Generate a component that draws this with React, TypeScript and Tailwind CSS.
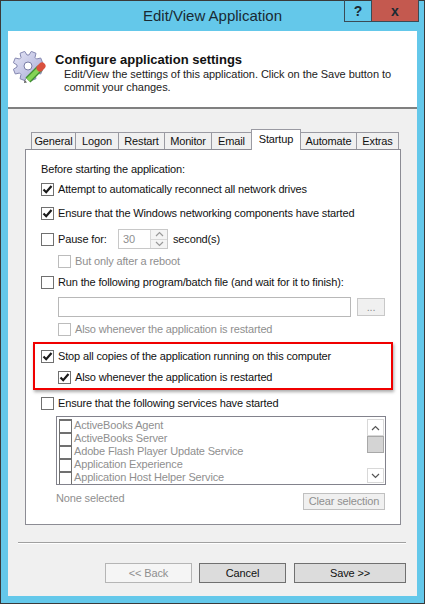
const uiFont = "font-['Liberation_Sans',Arial,sans-serif]"

function Check({ checked, disabled }: { checked?: boolean; disabled?: boolean }) {
  return (
    <span
      className={`flex h-[13px] w-[13px] shrink-0 items-center justify-center border bg-white ${
        disabled ? 'border-[#bcbcbc]' : 'border-[#707070]'
      }`}
    >
      {checked && (
        <svg width="11" height="11" viewBox="0 0 11 11">
          <path d="M1.5 5.5 L4.2 8.2 L9.5 2" fill="none" stroke="#1a1a1a" strokeWidth="2.2" />
        </svg>
      )}
    </span>
  )
}

function Row({
  label,
  checked,
  disabled,
  indent,
  className = '',
}: {
  label: string
  checked?: boolean
  disabled?: boolean
  indent?: boolean
  className?: string
}) {
  return (
    <div className={`flex h-[14px] items-center gap-[4px] ${indent ? 'ml-[17px]' : ''} ${className}`}>
      <Check checked={checked} disabled={disabled} />
      <span className={`whitespace-nowrap ${disabled ? 'text-[#8f8f8f]' : 'text-[#111]'}`}>{label}</span>
    </div>
  )
}

function Chevron({ up, color = '#555' }: { up?: boolean; color?: string }) {
  return (
    <svg width="9" height="6" viewBox="0 0 9 6">
      <path d={up ? 'M1 5 L4.5 1.5 L8 5' : 'M1 1 L4.5 4.5 L8 1'} fill="none" stroke={color} strokeWidth="1.2" />
    </svg>
  )
}

const tabs = [
  { name: 'General', w: 'w-[45px]' },
  { name: 'Logon', w: 'w-[44px]' },
  { name: 'Restart', w: 'w-[47px]' },
  { name: 'Monitor', w: 'w-[48px]' },
  { name: 'Email', w: 'w-[41px]' },
  { name: 'Startup', w: 'w-[50px]' },
  { name: 'Automate', w: 'w-[57px]' },
  { name: 'Extras', w: 'w-[43px]' },
]

const services = [
  'ActiveBooks Agent',
  'ActiveBooks Server',
  'Adobe Flash Player Update Service',
  'Application Experience',
  'Application Host Helper Service',
]

// 8 tooth gear outline around (16,15)
function gearPath() {
  const pts: string[] = []
  for (let i = 0; i < 8; i++) {
    const a = (i * Math.PI) / 4 + Math.PI / 8
    const offsets: [number, number][] = [
      [-0.3, 11],
      [-0.17, 15],
      [0.17, 15],
      [0.3, 11],
    ]
    for (const [da, r] of offsets) {
      pts.push(`${(16 + r * Math.cos(a + da)).toFixed(1)} ${(15 + r * Math.sin(a + da)).toFixed(1)}`)
    }
  }
  return `M${pts.join('L')}Z`
}

function GearIcon() {
  return (
    <svg width="34" height="34" viewBox="0 0 34 34" className="shrink-0">
      <defs>
        <linearGradient id="gear" x1="0" y1="0" x2="1" y2="1">
          <stop offset="0" stopColor="#e6e7f7" />
          <stop offset="1" stopColor="#a5a8d4" />
        </linearGradient>
      </defs>
      <path d={gearPath()} fill="url(#gear)" stroke="#8487b0" strokeWidth="1" />
      <circle cx="16" cy="15" r="4" fill="#fff" stroke="#7a7da6" />
      <path d="M16 29 L28 17" stroke="#3f8f30" strokeWidth="7" />
      <path d="M16 29 L28 17" stroke="#84d455" strokeWidth="4.5" />
      <path d="M28 17 L30 15" stroke="#d9503e" strokeWidth="7" strokeLinecap="round" />
      <path d="M12.5 28.5 L15 31.5 L12 32 Z" fill="#666" />
    </svg>
  )
}

export default function App() {
  return (
    <div className={`${uiFont} flex h-[604px] w-[425px] flex-col border border-[#3a3a3a] bg-[#64c8ea] px-[7px] pb-[7px] text-[11px] leading-[14px] tracking-[-0.15px] text-[#111]`}>
      <div className="relative flex h-[30px] shrink-0 items-center justify-center text-[15px] tracking-normal text-[#1a2a33]">
        Edit/View Application
        <div className="absolute right-[-2px] top-[-1px] flex h-[22px] border border-t-0 border-[#3a4a55]">
          <span className="flex w-[27px] items-center justify-center border-r border-[#3a4a55] text-[14px] font-bold">?</span>
          <span className="flex w-[46px] items-center justify-center bg-[#c4594f] text-[14px] font-bold">x</span>
        </div>
      </div>
      <div className="flex min-h-0 flex-1 flex-col bg-[#f0f0f0]">
        <div className="flex h-[78px] shrink-0 border-b-2 border-[#808080] bg-white pl-[4px] pt-[20px]">
          <GearIcon />
          <div className="ml-[9px] pt-[1px]">
            <div className="text-[13px] font-bold leading-[15px] tracking-normal">Configure application settings</div>
            <div className="ml-[9px] mt-[1px] w-[340px] leading-[13px] tracking-[-0.05px] text-[#222]">
              Edit/View the settings of this application. Click on the Save button to commit your changes.
            </div>
          </div>
        </div>
        <div className="mt-[20px] flex h-[20px] items-end pl-[23px]">
          {tabs.map((t) => (
            <span
              key={t.name}
              className={`flex items-center justify-center border border-b-0 border-[#9a9aa2] ${t.w} ${
                t.name === 'Startup'
                  ? 'relative z-10 mb-[-1px] -ml-px h-[21px] bg-white pb-[3px]'
                  : '-ml-px h-[17px] bg-[#f0f0f0] first:ml-0'
              }`}
            >
              {t.name}
            </span>
          ))}
        </div>
        <div className="ml-[17px] flex h-[376px] w-[376px] flex-col border border-[#8c8c94] bg-white pl-[15px] pt-[12px]">
          <div>Before starting the application:</div>
          <Row className="mt-[6px]" checked label="Attempt to automatically reconnect all network drives" />
          <Row className="mt-[10px]" checked label="Ensure that the Windows networking components have started" />
          <div className="mt-[9px] flex h-[20px] items-center">
            <Check />
            <span className="ml-[4px] w-[60px]">Pause for:</span>
            <div className="flex h-[20px] w-[50px] items-center justify-between border border-[#c8c8c8] pl-[4px] text-[#8f8f8f]">
              30
              <div className="flex h-full w-[17px] flex-col border-l border-[#d8d8d8]">
                <span className="flex flex-1 items-center justify-center border-b border-[#d8d8d8] bg-[#f4f4f4]">
                  <Chevron up color="#999" />
                </span>
                <span className="flex flex-1 items-center justify-center bg-[#f4f4f4]">
                  <Chevron color="#999" />
                </span>
              </div>
            </div>
            <span className="ml-[5px]">second(s)</span>
          </div>
          <Row className="mt-[5px]" indent disabled label="But only after a reboot" />
          <Row className="mt-[7px]" label="Run the following program/batch file (and wait for it to finish):" />
          <div className="mt-[8px] flex items-center">
            <div className="ml-[17px] h-[20px] w-[293px] border border-[#b8b8b8]" />
            <div className="ml-[6px] flex h-[18px] w-[28px] items-center justify-center border border-[#c8c8c8] bg-[#f0f0f0] text-[#8f8f8f]">...</div>
          </div>
          <Row className="mt-[5px]" indent disabled label="Also whenever the application is restarted" />
          <div className="-ml-[8px] mt-[6px] h-[48px] w-[360px] border-2 border-[#f00000] pl-[6px] pt-[5px] shadow-[1px_2px_3px_#aaa]">
            <Row checked label="Stop all copies of the application running on this computer" />
            <Row className="mt-[7px]" indent checked label="Also whenever the application is restarted" />
          </div>
          <Row className="mt-[6px]" label="Ensure that the following services have started" />
          <div className="ml-[15px] mt-[6px] flex h-[69px] w-[330px] border border-[#82828c] pt-[2px]">
            <div className="flex-1 overflow-hidden pl-[2px]">
              {services.map((s) => (
                <div key={s} className="flex h-[13px] items-center gap-[2px] text-[#8f8f8f]">
                  <span className="h-[14px] w-[13px] shrink-0 border border-b-0 border-[#707070] border-t-2" />
                  <span className="pb-[2px]">{s}</span>
                </div>
              ))}
            </div>
            <div className="mr-px flex h-[64px] w-[17px] flex-col">
              <span className="flex h-[17px] items-center justify-center border border-[#d8d8d8]">
                <Chevron up />
              </span>
              <span className="h-[17px] border border-[#a8a8a8] bg-[#d4d4d4]" />
              <span className="flex-1" />
              <span className="flex h-[15px] items-center justify-center border border-[#d8d8d8]">
                <Chevron />
              </span>
            </div>
          </div>
          <div className="ml-[15px] mt-[6px] flex w-[329px] items-start justify-between text-[#8f8f8f]">
            <span>None selected</span>
            <span className="mt-[2px] flex h-[17px] w-[82px] items-center justify-center border border-[#c0c0c0] bg-[#f0f0f0] pb-[2px]">Clear selection</span>
          </div>
        </div>
        <div className="ml-[10px] mt-[17px] h-[2px] w-[388px] border-t border-b border-t-[#a0a0a0] border-b-white" />
        <div className="ml-[97px] mt-[19px] flex">
          <span className="flex h-[20px] w-[87px] items-center justify-center border border-[#b5b5b5] bg-[#f5f5f5] text-[#8f8f8f]">&lt;&lt; Back</span>
          <span className="ml-[7px] flex h-[20px] w-[87px] items-center justify-center border border-[#707070] bg-[#dcdcdc]">Cancel</span>
          <span className="ml-[8px] flex h-[20px] w-[112px] items-center justify-center border border-[#707070] bg-[#dcdcdc]">Save &gt;&gt;</span>
        </div>
      </div>
    </div>
  )
}
